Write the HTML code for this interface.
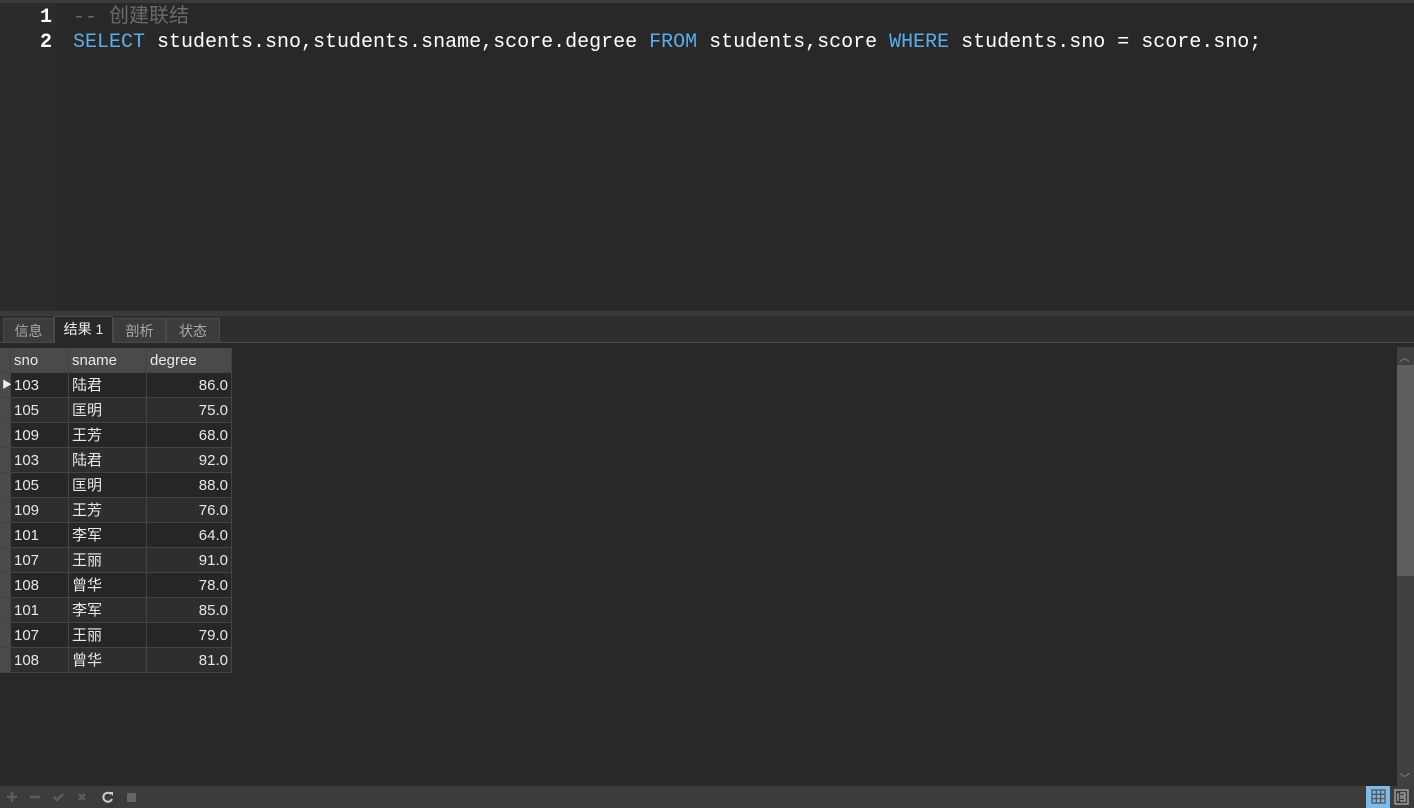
<!DOCTYPE html>
<html><head><meta charset="utf-8"><style>
*{margin:0;padding:0;box-sizing:border-box}
body{width:1414px;height:808px;background:#282828;overflow:hidden;position:relative;font-family:"Liberation Sans","Noto Sans CJK SC",sans-serif;}
.top{position:absolute;left:0;top:0;width:1414px;height:3px;background:#3a3a3a}
.ed{position:absolute;left:0;top:3px;width:1414px;height:308px;background:#282828}
.gut{position:absolute;left:0;top:3px;width:56px;height:308px;background:#2b2b2b}
.ln{position:absolute;font:20px "Liberation Mono","Noto Sans CJK SC",monospace;color:#fff;white-space:pre;line-height:25px}
.split{position:absolute;left:0;top:311px;width:1414px;height:5px;background:#3a3a3a}
.tabbar{position:absolute;left:0;top:316px;width:1414px;height:27px;background:#2e2e2e;border-bottom:1px solid #4a4a4a}
.tab{position:absolute;top:317px;height:26px;background:#3c3c3c;border:1px solid #4a4a4a;color:#a8a8a8;font-size:14px;line-height:24px;text-align:center}
.row{position:absolute;left:0;height:25px;width:232px}
.c{position:absolute;top:0;height:25px;border-right:1px solid #444;border-bottom:1px solid #444;color:#e8e8e8;font-size:15px;line-height:25px;padding-left:3px;white-space:nowrap}
</style></head><body>
<div class="top"></div>
<div class="ed"></div><div class="gut"></div>
<div class="ln" style="left:40px;top:5px;font-weight:bold">1</div>
<div class="ln" style="left:40px;top:30px;font-weight:bold">2</div>
<div class="ln" style="left:73px;top:5px;color:#6a6a6a">-- 创建联结</div>
<div class="ln" style="left:73px;top:30px"><span style="color:#5aaeeb">SELECT</span> students.sno,students.sname,score.degree <span style="color:#5aaeeb">FROM</span> students,score <span style="color:#5aaeeb">WHERE</span> students.sno = score.sno;</div>
<div class="split"></div>
<div class="tabbar"></div>
<div class="tab" style="left:3px;width:51px;top:318px;height:25px">信息</div>
<div class="tab" style="left:54px;width:59px;background:#282828;color:#eee;border-bottom:none;height:27px;top:316px">结果 1</div>
<div class="tab" style="left:113px;width:53px;top:318px;height:25px">剖析</div>
<div class="tab" style="left:166px;width:54px;top:318px;height:25px">状态</div>
<div id="g"></div>
<div style="position:absolute;left:1397px;top:347px;width:17px;height:439px;background:#404040"></div>
<div style="position:absolute;left:1397px;top:365px;width:17px;height:211px;background:#5e5e5e"></div>
<div style="position:absolute;left:1399px;top:349px;color:#888;font-size:11px">︿</div>
<div style="position:absolute;left:1399px;top:770px;color:#888;font-size:11px">﹀</div>
<div style="position:absolute;left:0;top:786px;width:1414px;height:22px;background:#3c3c3c"></div>
<svg style="position:absolute;left:0;top:786px" width="150" height="22">
<g stroke="#5c5c5c" stroke-width="2.5" fill="none">
<path d="M7 11h10M12 6v10"/><path d="M30 11h10"/><path d="M54 11l3 3 6-6"/><path d="M79 8l6 6M85 8l-6 6"/></g>
<path d="M111 8a4.5 4.5 0 1 0 1 5" stroke="#ccc" stroke-width="2" fill="none"/><path d="M109 6l4 0 0 4z" fill="#ccc"/>
<rect x="127" y="7" width="9" height="9" fill="#666"/></svg>
<div style="position:absolute;left:1366px;top:786px;width:24px;height:22px;background:#7dbbea"></div>
<svg style="position:absolute;left:1366px;top:786px" width="48" height="22">
<g stroke="#555" stroke-width="1.3" fill="none"><rect x="6" y="4" width="13" height="13"/><path d="M6 8.3h13M6 12.6h13M10.3 4v13M14.6 4v13"/></g>
<g stroke="#aaa" stroke-width="1.3" fill="none"><rect x="29" y="4" width="13" height="14"/><path d="M32 7v8M34 7h5v3h-5M34 12h5v3h-5"/></g></svg>
<script>
var d=[["103","陆君","86.0"],["105","匡明","75.0"],["109","王芳","68.0"],["103","陆君","92.0"],["105","匡明","88.0"],["109","王芳","76.0"],["101","李军","64.0"],["107","王丽","91.0"],["108","曾华","78.0"],["101","李军","85.0"],["107","王丽","79.0"],["108","曾华","81.0"]];
var h='<div class="row" style="top:348px"><div class="c" style="left:0;width:11px;background:#4a4a4a"></div><div class="c" style="left:11px;width:58px;background:#4a4a4a">sno</div><div class="c" style="left:69px;width:78px;background:#4a4a4a">sname</div><div class="c" style="left:147px;width:85px;background:#4a4a4a">degree</div></div>';
d.forEach(function(r,i){var t=373+i*25,bg=i%2?'#2e2e2e':'#262626';
h+='<div class="row" style="top:'+t+'px"><div class="c" style="left:0;width:11px;background:#4a4a4a;color:#eee;font-size:10px;padding-left:2px">'+(i==0?'▶':'')+'</div><div class="c" style="left:11px;width:58px;background:'+bg+'">'+r[0]+'</div><div class="c" style="left:69px;width:78px;background:'+bg+'">'+r[1]+'</div><div class="c" style="left:147px;width:85px;background:'+bg+';text-align:right;padding-right:3px">'+r[2]+'</div></div>';});
document.getElementById('g').innerHTML=h;
</script>
</body></html>
